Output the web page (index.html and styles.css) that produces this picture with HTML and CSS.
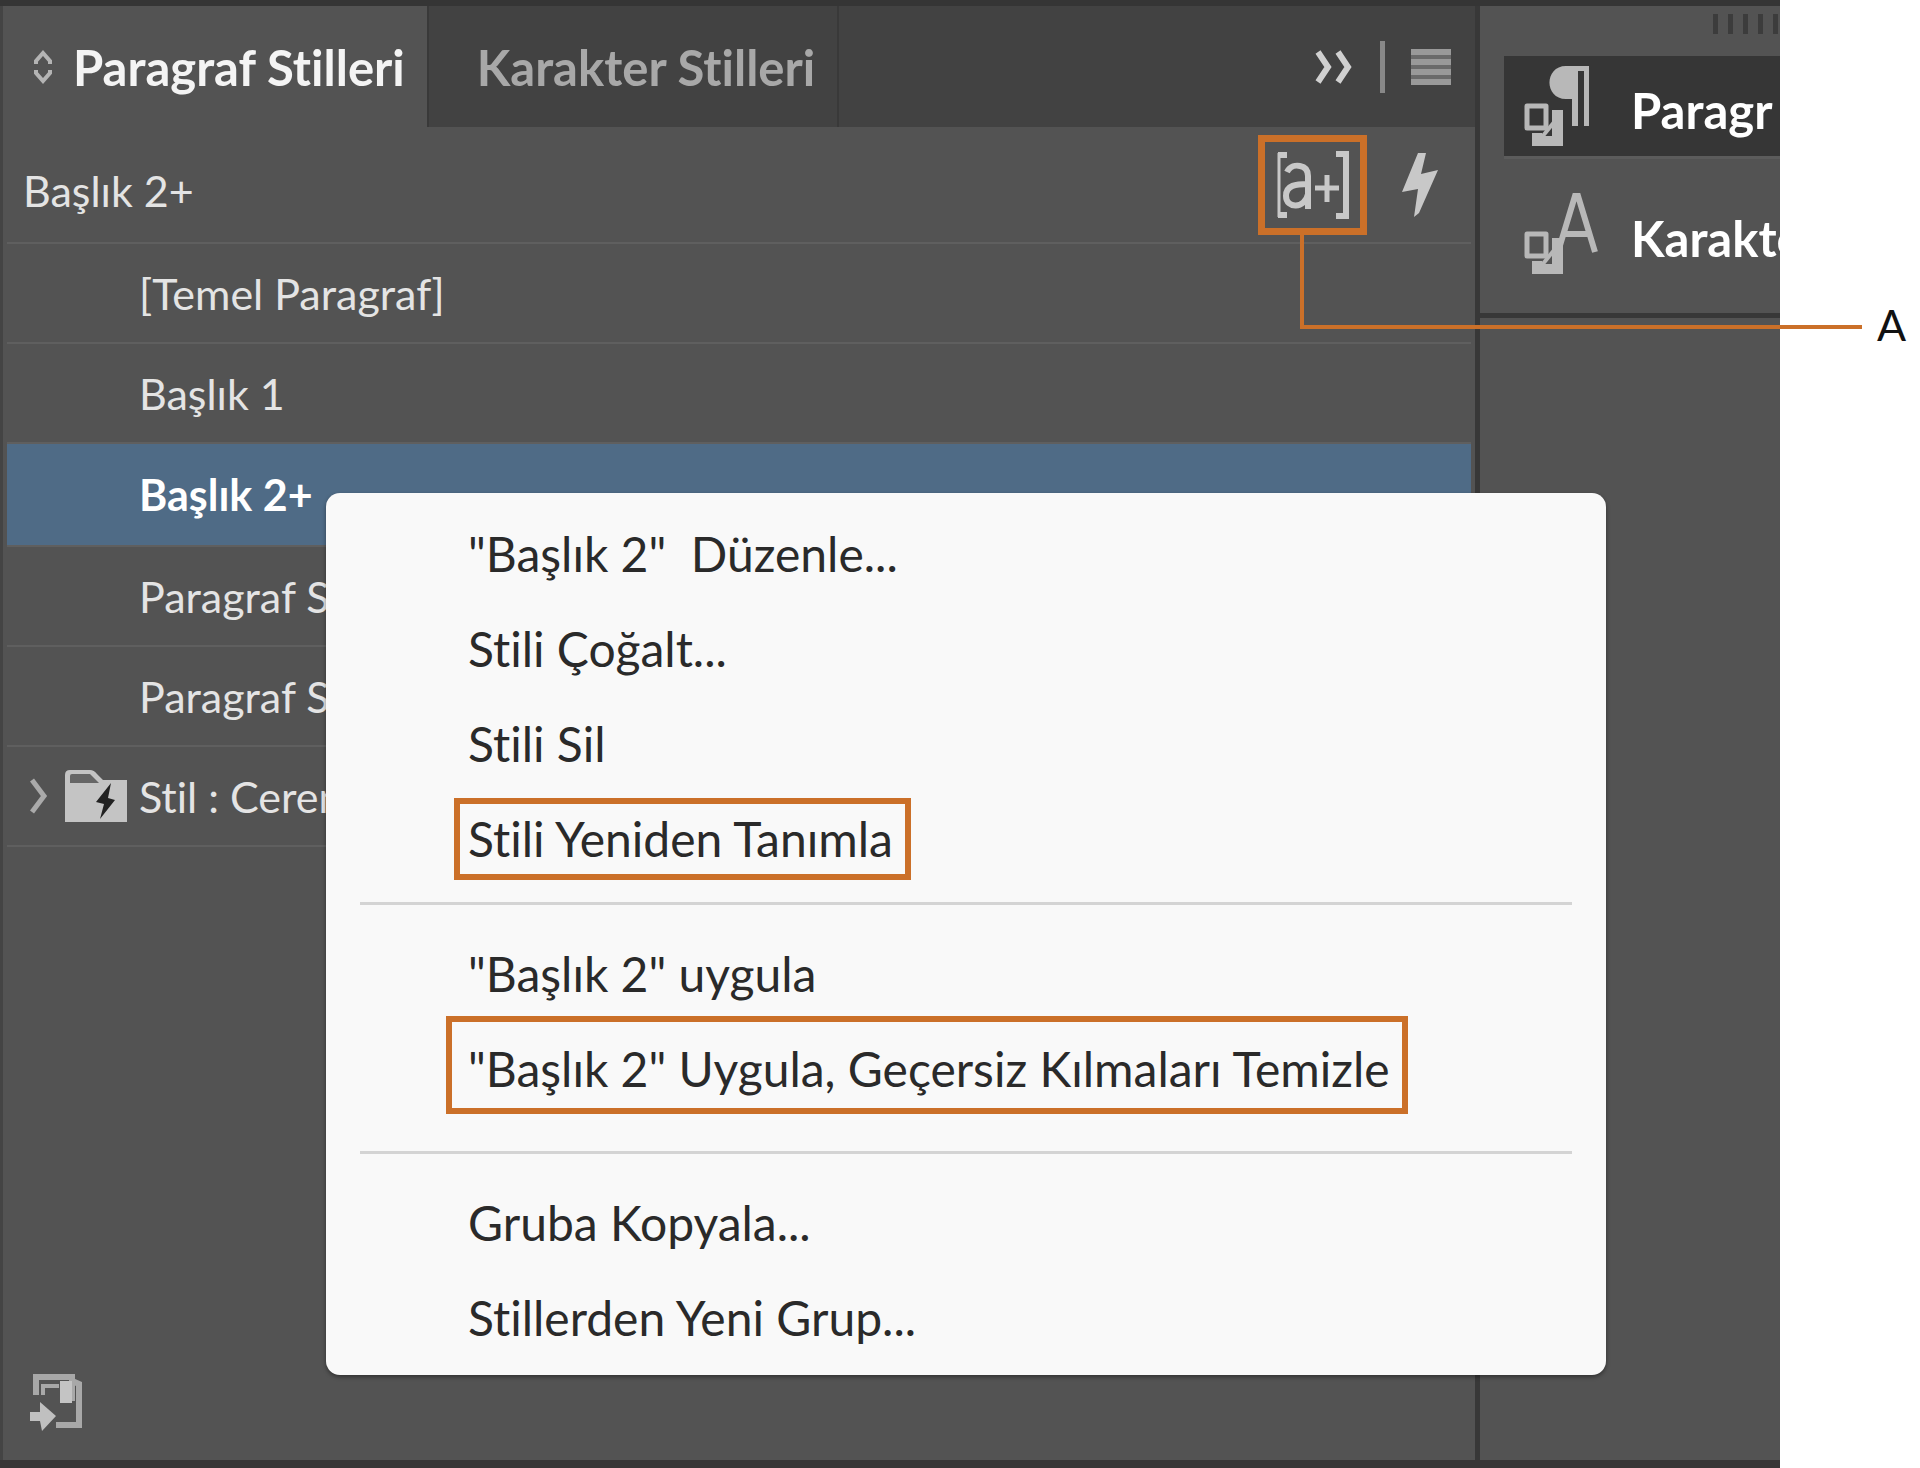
FILE: index.html
```html
<!DOCTYPE html>
<html lang="tr">
<head>
  <meta charset="UTF-8">
  <meta name="viewport" content="width=device-width, initial-scale=1.0">
  <title>Paragraf Stilleri</title>
  <link rel="stylesheet" href="styles.css">
</head>
<body>
  <main class="workspace">
    <section class="panel">
      <div class="tab-bar">
        <button class="tab active">
          <svg width="20" height="36" viewBox="0 0 20 36" fill="none" stroke="#b4b4b4" stroke-width="4"><path d="M3 15v-3l7-8 7 8v3M3 21v3l7 8 7-8v-3"/></svg>
          Paragraf Stilleri
        </button>
        <button class="tab">Karakter Stilleri</button>
        <div class="tab-tools">
          <button class="icon-btn" aria-label="Daralt">
            <svg width="40" height="36" viewBox="0 0 40 36" fill="none" stroke="#d0d0d0" stroke-width="6"><path d="M4 3l10 15L4 33M24 3l10 15-10 15"/></svg>
          </button>
          <span class="tool-divider"></span>
          <button class="icon-btn" aria-label="Panel menüsü">
            <svg width="40" height="36" viewBox="0 0 40 36"><path d="M0 0h40v36H0z" fill="#6a6a6a"/><path d="M0 0h40v6H0zM0 10h40v6H0zM0 20h40v6H0zM0 30h40v6H0z" fill="#999"/></svg>
          </button>
        </div>
      </div>

      <div class="current-style">
        <span>Başlık 2+</span>
        <div class="style-tools">
          <div class="callout">
            <button class="icon-btn override-btn" aria-label="Geçersiz kılma vurgulayıcı">
              <svg width="76" height="70" viewBox="0 0 76 70" fill="none" stroke="#c8c8c8">
                <path d="M4 3v64" stroke-width="3"/>
                <path d="M3 5h9M3 65h9" stroke-width="6"/>
                <path d="M61 4h10v62H61" stroke-width="6"/>
                <path d="M12 22c3-6 9-7 13-6 6 1 8 5 8 10v33M33 34c-12 0-22 1-22 12 0 13 19 13 22-2" stroke-width="6"/>
                <path d="M40 38h24M52 25v27" stroke-width="5"/>
              </svg>
            </button>
            <span class="leader"></span>
          </div>
          <button class="icon-btn" aria-label="Hızlı uygula">
            <svg width="38" height="64" viewBox="0 0 38 64" fill="#c8c8c8"><path d="M17 0h8l-5 21 17-4-19 43-5 4 4-28-16 3z"/></svg>
          </button>
        </div>
      </div>

      <ul class="style-list">
        <li>[Temel Paragraf]</li>
        <li>Başlık 1</li>
        <li class="selected">Başlık 2+</li>
        <li>Paragraf St</li>
        <li>Paragraf St</li>
        <li class="group">
          <svg width="20" height="36" viewBox="0 0 20 36" fill="none" stroke="#aaa" stroke-width="5"><path d="M3 2l12 16L3 34"/></svg>
          <svg width="62" height="52" viewBox="0 0 62 52">
            <path d="M0 52V5q0-5 5-5h20q4 0 7 4l6 6h24v42z" fill="#c4c4c4"/>
            <path d="M5 13V6q0-2 2-2h18l9 9z" fill="#666"/>
            <path d="M46 13L31 32l8 2-4 15 15-19-7-2z" fill="#222"/>
          </svg>
          Stil : Ceren
        </li>
      </ul>

      <div class="panel-footer">
        <button class="icon-btn" aria-label="Kitaplığa ekle">
          <svg width="52" height="58" viewBox="0 0 52 58">
            <path d="M6 22V4h36v24M40 7l9 4v41H26" fill="none" stroke="#a8a8a8" stroke-width="6"/>
            <path d="M13 22v-9h16" fill="none" stroke="#a8a8a8" stroke-width="4"/>
            <path d="M30 8h12v22H30z" fill="#c4c4c4"/>
            <path d="M0 39h10V29l16 14-14 15-2-10H0z" fill="#c0c0c0"/>
          </svg>
        </button>
      </div>
    </section>

    <aside class="dock">
      <div class="grip"><i></i><i></i><i></i><i></i><i></i></div>
      <div class="dock-group">
        <button class="dock-item active">
          <svg width="76" height="86" viewBox="0 0 76 86">
            <path d="M44 3h23v60h-5V8h-6v55h-6V36h-6c-22 0-22-33 0-33z" fill="#b8b8b8"/>
            <path d="M31 48h9v34H11V71h8v3h12z" fill="#b8b8b8" stroke="#b8b8b8" stroke-width="2"/>
            <path d="M5 43h19v22H5z" fill="none" stroke="#b8b8b8" stroke-width="5" stroke-linejoin="round"/>
            <path d="M20 74l13-16" stroke="#b8b8b8" stroke-width="4"/>
          </svg>
          <span>Paragr</span>
        </button>
        <button class="dock-item">
          <svg width="76" height="86" viewBox="0 0 76 86">
            <path d="M36 61L53 5h3l17 56M41 43h27" fill="none" stroke="#b8b8b8" stroke-width="6"/>
            <path d="M31 48h9v34H11V71h8v3h12z" fill="#b8b8b8" stroke="#b8b8b8" stroke-width="2"/>
            <path d="M5 43h19v22H5z" fill="none" stroke="#b8b8b8" stroke-width="5" stroke-linejoin="round"/>
            <path d="M20 74l13-16" stroke="#b8b8b8" stroke-width="4"/>
          </svg>
          <span>Karakte</span>
        </button>
      </div>
    </aside>

    <div class="context-menu" role="menu">
      <div class="menu-group">
        <button role="menuitem">"Başlık 2"&nbsp; Düzenle...</button>
        <button role="menuitem">Stili Çoğalt...</button>
        <button role="menuitem">Stili Sil</button>
        <button role="menuitem"><span class="mark">Stili Yeniden Tanımla</span></button>
      </div>
      <div class="menu-group">
        <button role="menuitem">"Başlık 2" uygula</button>
        <button role="menuitem"><span class="mark mark-large">"Başlık 2" Uygula, Geçersiz Kılmaları Temizle</span></button>
      </div>
      <div class="menu-group">
        <button role="menuitem">Gruba Kopyala...</button>
        <button role="menuitem">Stillerden Yeni Grup...</button>
      </div>
    </div>
  </main>

  <div class="legend">A</div>
</body>
</html>
```
FILE: styles.css
```css
* { box-sizing: border-box; }
body {
  margin: 0;
  display: flex;
  min-height: 100vh;
  background: #fff;
  font-family: Lato, 'Open Sans', sans-serif;
  font-size: 43px;
  font-variant-ligatures: none;
  color: #e4e4e4;
}
button {
  font: inherit;
  font-variant-ligatures: none;
  color: inherit;
  background: none;
  border: none;
  padding: 0;
  cursor: pointer;
}
svg { display: block; flex: none; }

.workspace {
  position: relative;
  flex: 1;
  min-width: 0;
  display: flex;
  background: #535353;
  border-top: 6px solid #353535;
  border-bottom: 8px solid #383636;
}

/* styles panel */
.panel {
  flex: 1;
  min-width: 0;
  display: flex;
  flex-direction: column;
  border-left: 3px solid #444;
  border-right: 5px solid #383838;
}
.tab-bar {
  display: flex;
  height: 121px;
  background: #424242;
}
.tab {
  display: flex;
  align-items: center;
  padding: 0 22px 0 48px;
  font-size: 49px;
  font-weight: bold;
  color: #a8a8a8;
  border-right: 2px solid #393939;
}
.tab.active {
  gap: 20px;
  padding: 0 22px 0 30px;
  background: #535353;
  color: #f4f4f4;
}
.tab-tools {
  display: flex;
  align-items: center;
  gap: 26px;
  margin-left: auto;
  padding-right: 24px;
}
.tool-divider { width: 5px; height: 52px; background: #888; }
.current-style {
  display: flex;
  align-items: center;
  justify-content: space-between;
  height: 115px;
  padding: 0 36px 0 20px;
}
.current-style > span { padding-top: 12px; }
.style-tools { display: flex; align-items: center; gap: 34px; }

/* highlighted button with its leader line */
.callout { position: relative; }
.override-btn {
  display: flex;
  align-items: center;
  justify-content: center;
  width: 109px;
  height: 100px;
  border: 7px solid #cb7029;
}
.leader {
  position: absolute;
  left: 42px;
  top: 100px;
  width: 562px;
  height: 94px;
  border-left: 4px solid #cb7029;
  border-bottom: 4px solid #cb7029;
}

.style-list {
  list-style: none;
  margin: 0 4px;
  padding: 0;
  border-top: 2px solid #5f5f5f;
}
.style-list li {
  display: flex;
  align-items: center;
  height: 100px;
  padding-left: 132px;
  border-bottom: 2px solid #5f5f5f;
}
.style-list .selected {
  height: 103px;
  background: #4f6b86;
  color: #fff;
  font-weight: bold;
}
.style-list .group { gap: 12px; padding-left: 22px; }
.style-list .group svg + svg { margin-left: 4px; }
.panel-footer { margin-top: auto; padding: 0 27px 20px; }

/* collapsed dock */
.dock { width: 300px; overflow: hidden; }
.grip { display: flex; justify-content: flex-end; gap: 10px; height: 50px; padding: 8px 2px 0 0; }
.grip i { width: 5px; height: 20px; background: #3c3c3c; }
.dock-group { padding-bottom: 22px; border-bottom: 5px solid #383838; }
.dock-item {
  display: flex;
  align-items: center;
  gap: 33px;
  width: 100%;
  height: 100px;
  margin-left: 24px;
  padding-left: 18px;
  font-size: 49px;
  font-weight: bold;
  color: #fff;
}
.dock-item span { padding-top: 8px; }
.dock-item + .dock-item { height: 135px; padding-top: 17px; border-top: 3px solid #5c5c5c; }
.dock-item.active { background: #363636; }

/* context menu */
.context-menu {
  position: absolute;
  left: 326px;
  right: 174px;
  top: 487px;
  padding: 13px 34px 10px;
  background: #f9f9f9;
  color: #2a2a2a;
  border-radius: 14px;
  box-shadow: 0 2px 4px rgba(0,0,0,0.4);
}
.menu-group + .menu-group { padding-top: 21px; border-top: 3px solid #d4d4d4; }
.menu-group:first-child { padding-bottom: 16px; }
.menu-group:nth-child(2) { padding-bottom: 35px; }
.menu-group button {
  display: flex;
  align-items: center;
  width: 100%;
  height: 95px;
  padding-left: 108px;
  font-size: 48px;
  white-space: nowrap;
}
.mark {
  margin: -6px -14px;
  padding: 0 12px 0 8px;
  border: 6px solid #cb7029;
  line-height: 70px;
}
.mark-large { margin: -18px -22px -10px; padding: 12px 12px 4px 16px; }

.legend {
  width: 140px;
  padding: 298px 14px 0 0;
  text-align: right;
  line-height: 54px;
  color: #111;
}
```
